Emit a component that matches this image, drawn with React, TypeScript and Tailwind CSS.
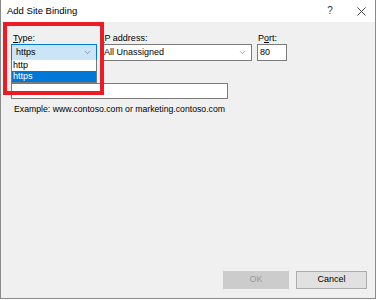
import { ChevronDown } from 'lucide-react'

export default function App() {
  return (
    <div className="w-[377px] h-[300px] bg-white relative overflow-hidden font-['Liberation_Sans',Arial,sans-serif] text-[9px] text-black">
      <div className="w-[376px] h-[299px] border-l border-r border-b border-[#8a8a8a] flex flex-col">
        {/* title bar */}
        <div className="h-[22px] bg-white flex items-center pl-[6px] pr-[9px]">
          <span className="flex-1 leading-none text-[9.5px]">Add Site Binding</span>
          <span className="w-[10px] text-center mr-[22px] leading-none text-[10px] text-[#333]">?</span>
          <svg width="9" height="9" viewBox="0 0 9 9" className="text-[#444]">
            <path d="M0.5 0.5 L8.5 8.5 M8.5 0.5 L0.5 8.5" stroke="currentColor" strokeWidth="1" />
          </svg>
        </div>

        {/* body */}
        <div className="flex-1 bg-[#f0f0f0] relative pl-[10px] pr-[8px] pt-[11px] flex flex-col">
          <div className="flex">
            <div className="w-[86px]">
              <div className="h-[11px] leading-[11px] ml-[2px]"><u>T</u>ype:</div>
              <div className="h-[17px] border border-[#0078d7] bg-[#cce4f7] flex items-center pl-[4px] pr-[4px]">
                <span className="flex-1 leading-none">https</span>
                <ChevronDown size={9} strokeWidth={1.3} className="text-[#555]" />
              </div>
            </div>
            <div className="w-[151px] ml-[4px]">
              <div className="h-[11px] leading-[11px] ml-[1px]"><u>I</u>P address:</div>
              <div className="h-[17px] border border-[#7a7a7a] bg-white flex items-center pl-[2px] pr-[4px]">
                <span className="flex-1 leading-none">All Unassigned</span>
                <ChevronDown size={9} strokeWidth={1.3} className="text-[#555]" />
              </div>
            </div>
            <div className="w-[30px] ml-[5px]">
              <div className="h-[11px] leading-[11px] ml-[1px]">P<u>o</u>rt:</div>
              <div className="h-[17px] border border-[#7a7a7a] bg-white flex items-center pl-[2px]">
                <span className="leading-none">80</span>
              </div>
            </div>
          </div>

          <div className="mt-[7px] h-[11px] leading-[11px] ml-[2px]"><u>H</u>ost name:</div>
          <div className="mt-[4px] w-[217px] h-[16px] border border-[#7a7a7a] bg-white" />
          <div className="mt-[4px] ml-[3px] leading-[12px] text-[8.7px]">Example: www.contoso.com or marketing.contoso.com</div>

          <div className="mt-auto mb-[9px] flex justify-end gap-[7px]">
            <div className="w-[66px] h-[18px] border border-[#cccccc] bg-[#cccccc] text-[#9a9a9a] flex items-center justify-center">OK</div>
            <div className="w-[71px] h-[18px] border border-[#adadad] bg-[#e1e1e1] flex items-center justify-center">Cancel</div>
          </div>

          {/* open dropdown list */}
          <div className="absolute left-[10px] top-[38px] w-[86px] border border-[#7a7a7a] border-t-0 bg-white">
            <div className="h-[11px] leading-[11px] pl-[1px]">http</div>
            <div className="h-[11px] leading-[11px] pl-[1px] bg-[#0078d7] text-white">https</div>
          </div>
        </div>
      </div>

      {/* red highlight */}
      <div className="absolute left-[3px] top-[22px] w-[101px] h-[73px] border-4 border-[#ed1c24]" />
    </div>
  )
}
